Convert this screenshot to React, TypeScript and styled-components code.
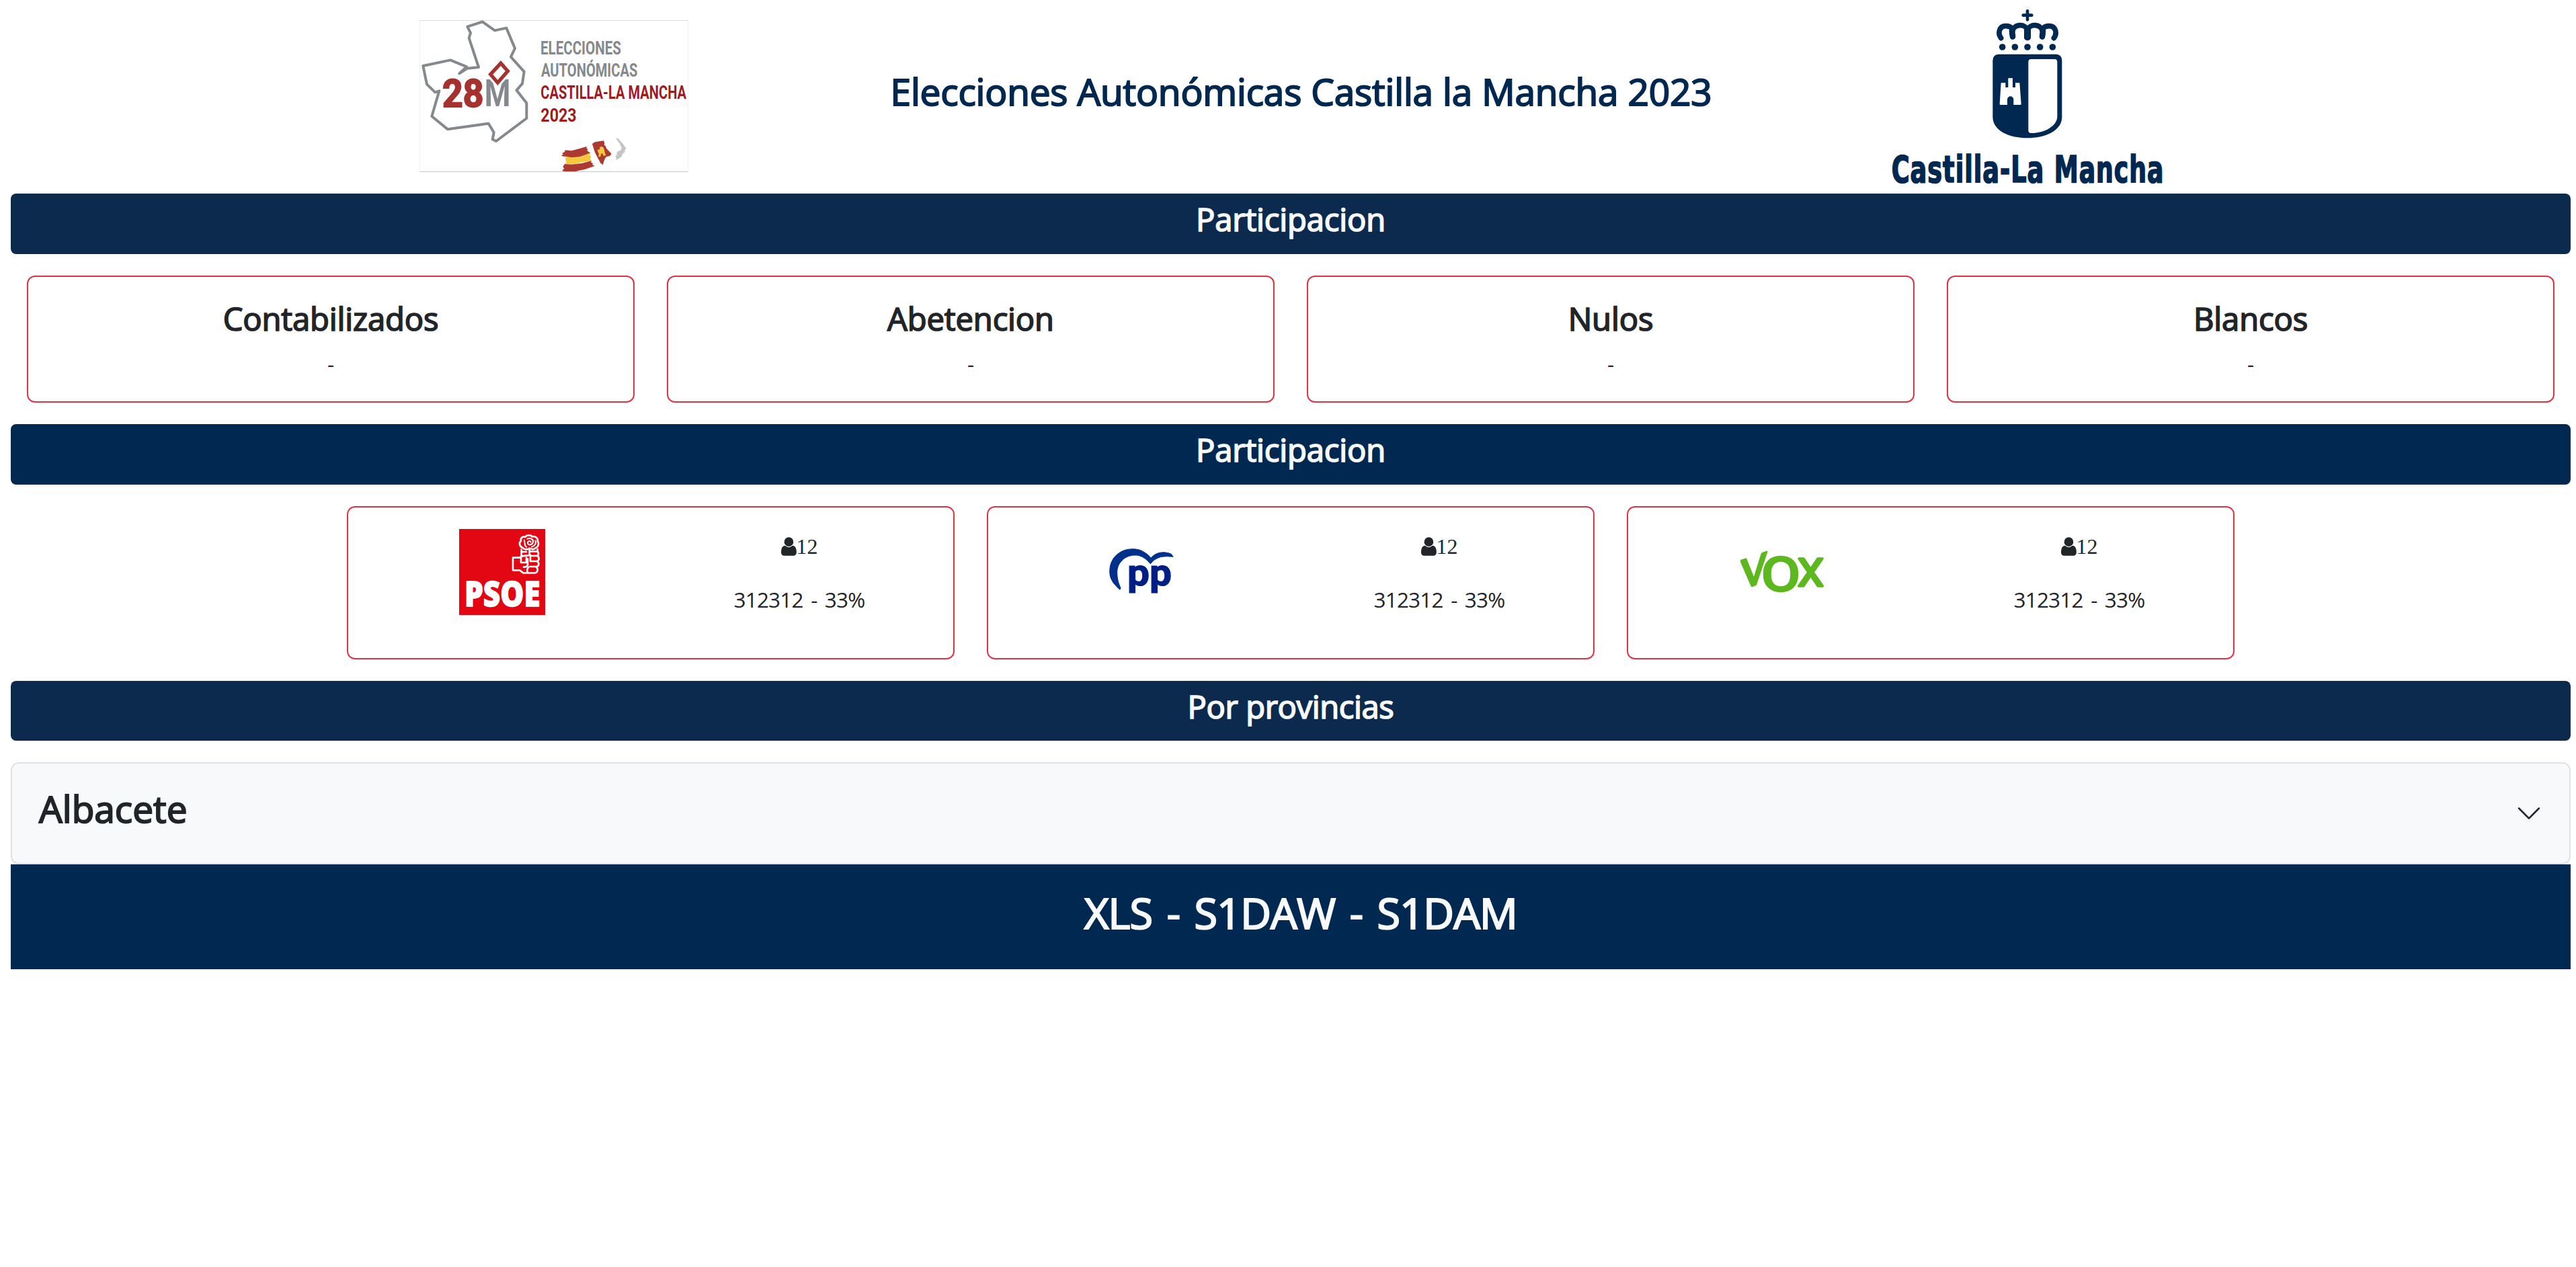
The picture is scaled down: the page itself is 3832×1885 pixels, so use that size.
import React from "react";
import styled, { createGlobalStyle } from "styled-components";

const NAVY = "#002850";

const GlobalStyle = createGlobalStyle`
  *, *::before, *::after { box-sizing: border-box; }
  body {
    margin: 0;
    background: #fff;
    color: #212529;
    font-family: "Open Sans", "Noto Sans", sans-serif;
    font-size: 31.5px;
    line-height: 48px;
  }
  svg { display: block; flex: none; overflow: visible; }
  h1, h2, h3, p { margin: 0; }
`;

const Page = styled.div`
  padding: 0 8px 0 16px;
`;

const Header = styled.header`
  display: flex;
  justify-content: space-between;
  height: 288px;
  padding: 12px 608px 16px;
`;

const LogoSlot = styled.div<{ $top: number }>`
  padding-top: ${(p) => p.$top}px;
`;

const PageTitle = styled.h1`
  padding: 90px 0 0 31px;
  color: ${NAVY};
  font-size: 55px;
  font-weight: 500;
  -webkit-text-stroke: 2px currentColor;
  line-height: 67.2px;
  letter-spacing: -0.2px;
  white-space: nowrap;
`;

const Band = styled.h3<{ $soft?: boolean; $tracking?: number }>`
  height: 89.6px;
  margin-bottom: 32px;
  padding-top: 10px;
  border-radius: 8px;
  background: ${(p) => (p.$soft ? "#0c2a4d" : NAVY)};
  color: #f8f9fa;
  font-size: 47.2px;
  font-weight: 500;
  -webkit-text-stroke: 1.7px currentColor;
  line-height: 57.6px;
  letter-spacing: ${(p) => p.$tracking ?? -0.15}px;
  text-align: center;
`;

const CardRow = styled.div`
  display: flex;
  justify-content: center;
  gap: 48px;
  margin: 0 24px 32px;
`;

const Card = styled.section<{ $height: number }>`
  width: 904px;
  height: ${(p) => p.$height}px;
  padding: 32px;
  border: 2px solid #dc3545;
  border-radius: 12px;
  text-align: center;
`;

const CardTitle = styled.h3`
  margin-bottom: 14px;
  padding-top: 2px;
  font-size: 47.2px;
  font-weight: 500;
  -webkit-text-stroke: 1.7px currentColor;
  line-height: 57.6px;
  letter-spacing: -0.15px;
`;

const PartyGrid = styled.div`
  display: grid;
  grid-template-columns: 1fr 1fr;
  margin: 0 -24px;
`;

const PartyLogo = styled.div`
  display: flex;
  justify-content: center;
`;

const PartyStats = styled.div`
  display: flex;
  flex-direction: column;
  align-items: center;
  gap: 39px;
  padding-top: 10px;
`;

const Seats = styled.div`
  display: flex;
  font-family: "Liberation Serif", serif;
  font-size: 32px;
  line-height: 32px;
`;

const Votes = styled.p`
  letter-spacing: -0.8px;
  word-spacing: 4px;
`;

const Accordion = styled.div`
  display: flex;
  align-items: center;
  justify-content: space-between;
  height: 151.6px;
  padding: 0 40px;
  border: 2px solid #dee2e6;
  border-radius: 12px;
  background: #f8f9fb;
`;

const AccordionTitle = styled.h2`
  margin-bottom: 16px;
  font-size: 55px;
  font-weight: 500;
  -webkit-text-stroke: 2px currentColor;
  line-height: 67.2px;
`;

const Footer = styled.footer`
  height: 156px;
  padding: 34px 0 0 30px;
  background: ${NAVY};
  color: #f8f9fa;
  font-size: 63px;
  font-weight: 500;
  -webkit-text-stroke: 2.2px currentColor;
  line-height: 76.8px;
  letter-spacing: -0.9px;
  word-spacing: 6px;
  text-align: center;
`;

type CondensedProps = React.SVGProps<SVGTextElement> & {
  left: number;
  base: number;
  span: number;
  squeeze: number;
};

/* Lettering narrowed horizontally by `squeeze` so that it spans `span` units. */
const Condensed = ({ left, base, span, squeeze, children, ...rest }: CondensedProps) => (
  <text
    transform={`translate(${left} ${base}) scale(${squeeze} 1)`}
    textLength={span / squeeze}
    lengthAdjust="spacingAndGlyphs"
    {...rest}
  >
    {children}
  </text>
);

const ElectionLogo = () => (
  <svg width="400" height="226" viewBox="72 60 1200 678">
    <path d="M73.5 60V738M1270.5 60V738" stroke="#f1f1f1" strokeWidth="3" />
    <path d="M72 61.5H1272" stroke="#dcdcdc" strokeWidth="3" />
    <path
      d="M250 298L283 268L210 238L88 264L105 346L142 382L160 376L127 489L198 547L380 521L404 561L398 592L414 600L550 498V430L505 373L531 343L539 290L480 224L498 186L460 95L408 106L353 67L286 89L300 117L293 140L336 270L286 275Z"
      fill="none"
      stroke="#85888c"
      strokeWidth="12"
      strokeLinejoin="round"
    />
    <g fontFamily="Roboto, sans-serif" fontWeight="700">
      <g fontSize="84" fill="#85888c">
        <Condensed left={612} base={213} span={360} squeeze={0.735}>ELECCIONES</Condensed>
        <Condensed left={615} base={313} span={430} squeeze={0.718}>AUTONÓMICAS</Condensed>
      </g>
      <g fontSize="84" fill="#a01a1d">
        <Condensed left={613} base={412} span={650} squeeze={0.717}>CASTILLA-LA MANCHA</Condensed>
        <Condensed left={613} base={512} span={160} squeeze={0.829}>2023</Condensed>
      </g>
      <Condensed left={174} base={447} span={184} squeeze={0.924} fontSize="172" fill="#a63230" stroke="#a63230" strokeWidth="6">28</Condensed>
      <Condensed left={362} base={443} span={116} squeeze={0.8} fontSize="167" fill="#85888c">M</Condensed>
    </g>
    <path d="M435 252L466 287L421 339L389 302Z" fill="#fff" stroke="#fff" strokeWidth="34" />
    <path d="M435 252L466 287L421 339L389 302Z" fill="#fff" stroke="#a63230" strokeWidth="16" />
    <g transform="translate(690 570)">
      <path d="M32 70L60 73L100 62L128 54L127 61L133 66L130 72L146 84L130 90L90 102L50 103L15 96L24 88L18 84L30 78Z" fill="#ac3a33" />
      <path d="M30 97L60 103L100 99L145 82L142 92L147 100L144 108L148 118L100 126L60 134L30 130L38 124L33 112L36 106Z" fill="#f5c840" />
      <path d="M30 132L60 134L110 128L150 117L147 124L156 130L154 136L165 140L120 156L90 162L70 168H35L18 161L28 152L22 144Z" fill="#ac3a33" />
      <path d="M153 42L165 34L204 28L208 38L206 46L214 54L216 62L239 86L232 96L215 100L208 112L200 136L190 128L184 116L176 102L164 78Z" fill="#ac3a33" />
      <path d="M176 70L182 66L186 70L187 56L196 54L202 58L206 66L210 84L214 92L204 97L198 84L192 88L190 99L180 100L183 88Z" fill="#f5c840" />
      <path d="M260 16L268 18L290 42L300 56L305 62L298 70L299 78L288 88L285 98L272 108L258 114L260 104L256 96L264 90L262 82L270 74L280 72L284 60L276 42L264 26Z" fill="#c4c5c7" />
    </g>
    <path d="M72 736.5H1272" stroke="#c6c6c6" strokeWidth="3" />
  </svg>
);

const CrownHalf = () => (
  <g fill="none" stroke={NAVY} strokeLinecap="round" strokeLinejoin="round">
    <path d="M560 170C545 150 550 116 582 116Q600 116 610 128" strokeWidth="23" />
    <path d="M612 164L609 148C612 104 672 102 678 138" strokeWidth="23" />
    <path d="M612 163L609 138" strokeWidth="26" />
    <path d="M678 138V166" strokeWidth="30" />
  </g>
);

const RegionLogo = () => (
  <svg width="400" height="262" viewBox="78 36 1200 786">
    <path d="M659 68H697M678 49V88" stroke={NAVY} strokeWidth="14" strokeLinecap="round" />
    <CrownHalf />
    <g transform="translate(1356 0) scale(-1 1)">
      <CrownHalf />
    </g>
    {[566, 622, 678, 734, 790].map((x) => (
      <circle key={x} cx={x} cy="210" r="14.5" fill={NAVY} />
    ))}
    <path d="M549 242H806Q832 244 832 270V522C832 580 765 616 678 616C590 616 523 580 523 522V270Q523 244 549 242Z" fill={NAVY} />
    <path d="M694 264H799Q811 264 811 276V520C811 562 755 594 694 594Q682 594 682 582V276Q682 264 694 264Z" fill="#fff" />
    <path d="M560 370H580V390H592V349H612V390H624V370H643L650 464Q650 468 646 468H616V444A14 14 0 0 0 588 444V468H558Q554 468 554 464Z" fill="#fff" />
    <g
      fontFamily="'DejaVu Sans Condensed', 'DejaVu Sans', sans-serif"
      fontWeight="700"
      fontSize="165"
      fill={NAVY}
      stroke={NAVY}
      strokeWidth="5"
      letterSpacing="4"
    >
      <Condensed left={71} base={812} span={683} squeeze={0.77}>Castilla-La</Condensed>
      <Condensed left={797} base={812} span={491} squeeze={0.75}>Mancha</Condensed>
    </g>
  </svg>
);

const PsoeLogo = () => (
  <svg width="128" height="128" viewBox="0 0 384 384">
    <rect width="384" height="384" fill="#e30613" />
    <g fill="none" stroke="#fff" strokeWidth="8" strokeLinejoin="round" strokeLinecap="round">
      <path d="M284 84C268 78 266 60 276 54C272 40 284 32 294 36C302 26 320 26 326 34C340 30 354 42 350 54C358 64 354 80 342 84C334 94 322 90 314 86C304 94 290 92 284 84Z" />
      <path d="M290 50C296 62 288 72 300 80M304 44C318 38 332 46 330 58C328 72 310 74 306 64C304 56 314 50 320 58M340 52C346 66 336 76 324 80" strokeWidth="6" />
      <path d="M278 92V122M278 102H300M314 88V112M350 90V100" />
      <path d="M272 128H240V184H270L286 196H302" />
      <path d="M274 124C286 118 306 120 318 116M276 126V150H300V128M306 134V160C304 168 296 170 288 170" />
      <path d="M318 100H344Q354 100 354 110T344 120H322M322 120H346Q356 122 356 132T346 144H318V122M318 144H346Q355 146 355 156T346 168H314M314 168H340Q350 170 350 182T338 196H306Q300 184 308 172" />
    </g>
    <Condensed left={24} base={346} span={338} squeeze={0.82} fontFamily="'Open Sans', sans-serif" fontWeight="800" fontSize="156" fill="#fff" stroke="#fff" strokeWidth="4">PSOE</Condensed>
  </svg>
);

const PpLogo = () => (
  <svg width="128" height="128" viewBox="0 0 128 128">
    <g transform="scale(.5995 .33333) translate(-308.6 -141)">
      <path d="M360 411C344 385 335 365 335 330C335 270 360 230 392 230C412 230 428 248 437 271C446 252 458 244 470 245C482 246 490 252 492 265C468 260 450 265 436 296C425 270 410 258 398 258C372 260 353 290 353 335C353 370 358 390 362 405Z" fill="#002f8c" stroke="#002f8c" strokeWidth="2" />
    </g>
    <Condensed left={42} base={84} span={66} squeeze={0.96} fontFamily="Roboto, sans-serif" fontWeight="700" fontSize="56" fill="#001f86" stroke="#001f86" strokeWidth="1.2">pp</Condensed>
  </svg>
);

const VoxLogo = () => (
  <svg width="128" height="128" viewBox="0 0 128 128">
    <g fontFamily="Roboto, sans-serif" fontWeight="400" fill="#5cb81e" stroke="#5cb81e" strokeWidth="3.4" strokeLinejoin="round">
      <text transform="translate(18 85) skewY(-19)" x="-15.5" y="0" fontSize="60" textLength="39" lengthAdjust="spacingAndGlyphs">V</text>
      <text x="33" y="91.5" fontSize="70" textLength="58" lengthAdjust="spacingAndGlyphs">O</text>
      <text x="87" y="85" fontSize="58" textLength="39" lengthAdjust="spacingAndGlyphs">X</text>
    </g>
  </svg>
);

const UserIcon = () => (
  <svg width="22.86" height="32" viewBox="0 0 1280 1792" fill="#212529">
    <path d="M1280 1399q0 109-62.5 187t-150.5 78h-854q-88 0-150.5-78t-62.5-187q0-85 8.5-160.5t31.5-152 58.5-131 94-89 134.5-34.5q131 128 313 128t313-128q76 0 134.5 34.5t94 89 58.5 131 31.5 152 8.5 160.5zm-256-887q0 159-112.5 271.5t-271.5 112.5-271.5-112.5-112.5-271.5 112.5-271.5 271.5-112.5 271.5 112.5 112.5 271.5z" />
  </svg>
);

const ChevronIcon = () => (
  <svg width="40" height="40" viewBox="0 0 16 16" fill="#212529">
    <path d="M1.646 4.646a.5.5 0 0 1 .708 0L8 10.293l5.646-5.647a.5.5 0 0 1 .708.708l-6 6a.5.5 0 0 1-.708 0l-6-6a.5.5 0 0 1 0-.708z" />
  </svg>
);

const TOTALS = ["Contabilizados", "Abetencion", "Nulos", "Blancos"];

const PARTIES = [
  { name: "psoe", Logo: PsoeLogo },
  { name: "pp", Logo: PpLogo },
  { name: "vox", Logo: VoxLogo },
];

export default function App() {
  return (
    <Page>
      <GlobalStyle />
      <Header>
        <LogoSlot $top={18}>
          <ElectionLogo />
        </LogoSlot>
        <PageTitle>Elecciones Autonómicas Castilla la Mancha 2023</PageTitle>
        <LogoSlot $top={0}>
          <RegionLogo />
        </LogoSlot>
      </Header>

      <Band $soft>Participacion</Band>
      <CardRow>
        {TOTALS.map((label) => (
          <Card key={label} $height={189.6}>
            <CardTitle>{label}</CardTitle>
            <p>-</p>
          </Card>
        ))}
      </CardRow>

      <Band>Participacion</Band>
      <CardRow>
        {PARTIES.map(({ name, Logo }) => (
          <Card key={name} $height={228}>
            <PartyGrid>
              <PartyLogo>
                <Logo />
              </PartyLogo>
              <PartyStats>
                <Seats>
                  <UserIcon />
                  12
                </Seats>
                <Votes>312312 - 33%</Votes>
              </PartyStats>
            </PartyGrid>
          </Card>
        ))}
      </CardRow>

      <Band $soft $tracking={-0.4}>Por provincias</Band>
      <Accordion>
        <AccordionTitle>Albacete</AccordionTitle>
        <ChevronIcon />
      </Accordion>
      <Footer>XLS - S1DAW - S1DAM</Footer>
    </Page>
  );
}
